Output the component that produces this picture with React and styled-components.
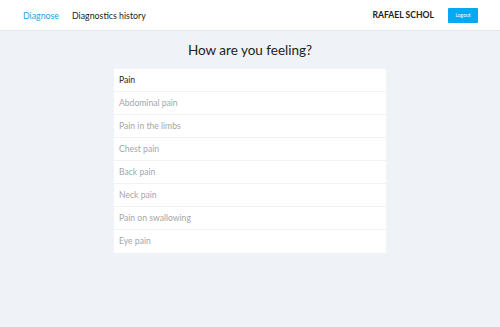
import React from "react";
import styled, { createGlobalStyle } from "styled-components";

const GlobalStyle = createGlobalStyle`
  html, body {
    margin: 0;
    padding: 0;
    background: #eff3f7;
    font-family: Lato, "Noto Sans", sans-serif;
  }
`;

const symptoms = [
  "Abdominal pain",
  "Pain in the limbs",
  "Chest pain",
  "Back pain",
  "Neck pain",
  "Pain on swallowing",
  "Eye pain",
];

export default function App() {
  return (
    <>
      <GlobalStyle />
      <Page>
        <Header>
          <Nav>
            <NavLink $active>Diagnose</NavLink>
            <NavLink>Diagnostics history</NavLink>
          </Nav>
          <User>
            <UserName>RAFAEL SCHOL</UserName>
            <LogoutButton>Logout</LogoutButton>
          </User>
        </Header>
        <Main>
          <Title>How are you feeling?</Title>
          <List>
            <Item $head>Pain</Item>
            {symptoms.map((s) => (
              <Item key={s}>{s}</Item>
            ))}
          </List>
        </Main>
      </Page>
    </>
  );
}

const Page = styled.div`
  min-height: 327px;
  background: #eff3f7;
`;

const Header = styled.header`
  height: 31px;
  background: #fff;
  border-bottom: 1px solid #e3e8ee;
  display: flex;
  align-items: center;
  justify-content: space-between;
  padding: 0 22px 0 23px;
  box-sizing: border-box;
`;

const Nav = styled.nav`
  display: flex;
  gap: 13px;
`;

const NavLink = styled.a`
  font-size: 8.8px;
  color: ${(p) => (p.$active ? "#1aa5e6" : "#222")};
  cursor: pointer;
`;

const User = styled.div`
  display: flex;
  align-items: center;
  gap: 14px;
`;

const UserName = styled.span`
  font-size: 8.6px;
  font-weight: 700;
  color: #222;
`;

const LogoutButton = styled.button`
  width: 30px;
  height: 15px;
  padding: 0;
  border: none;
  border-radius: 1px;
  background: #03a9f4;
  color: #fff;
  font-family: inherit;
  font-size: 5px;
`;

const Main = styled.main`
  display: flex;
  flex-direction: column;
  align-items: center;
  padding-top: 9px;
`;

const Title = styled.h1`
  margin: 0 0 9px;
  font-size: 13.5px;
  font-weight: 400;
  color: #222;
  line-height: 20px;
`;

const List = styled.ul`
  list-style: none;
  margin: 0;
  padding: 0;
  width: 272px;
  background: #fff;
`;

const Item = styled.li`
  height: 23px;
  line-height: 22px;
  padding: 0 5px;
  box-sizing: border-box;
  font-size: 8.6px;
  color: ${(p) => (p.$head ? "#222" : "#a3a6ab")};
  border-bottom: 1px solid #f0f2f4;

  &:last-child {
    border-bottom: none;
  }
`;
